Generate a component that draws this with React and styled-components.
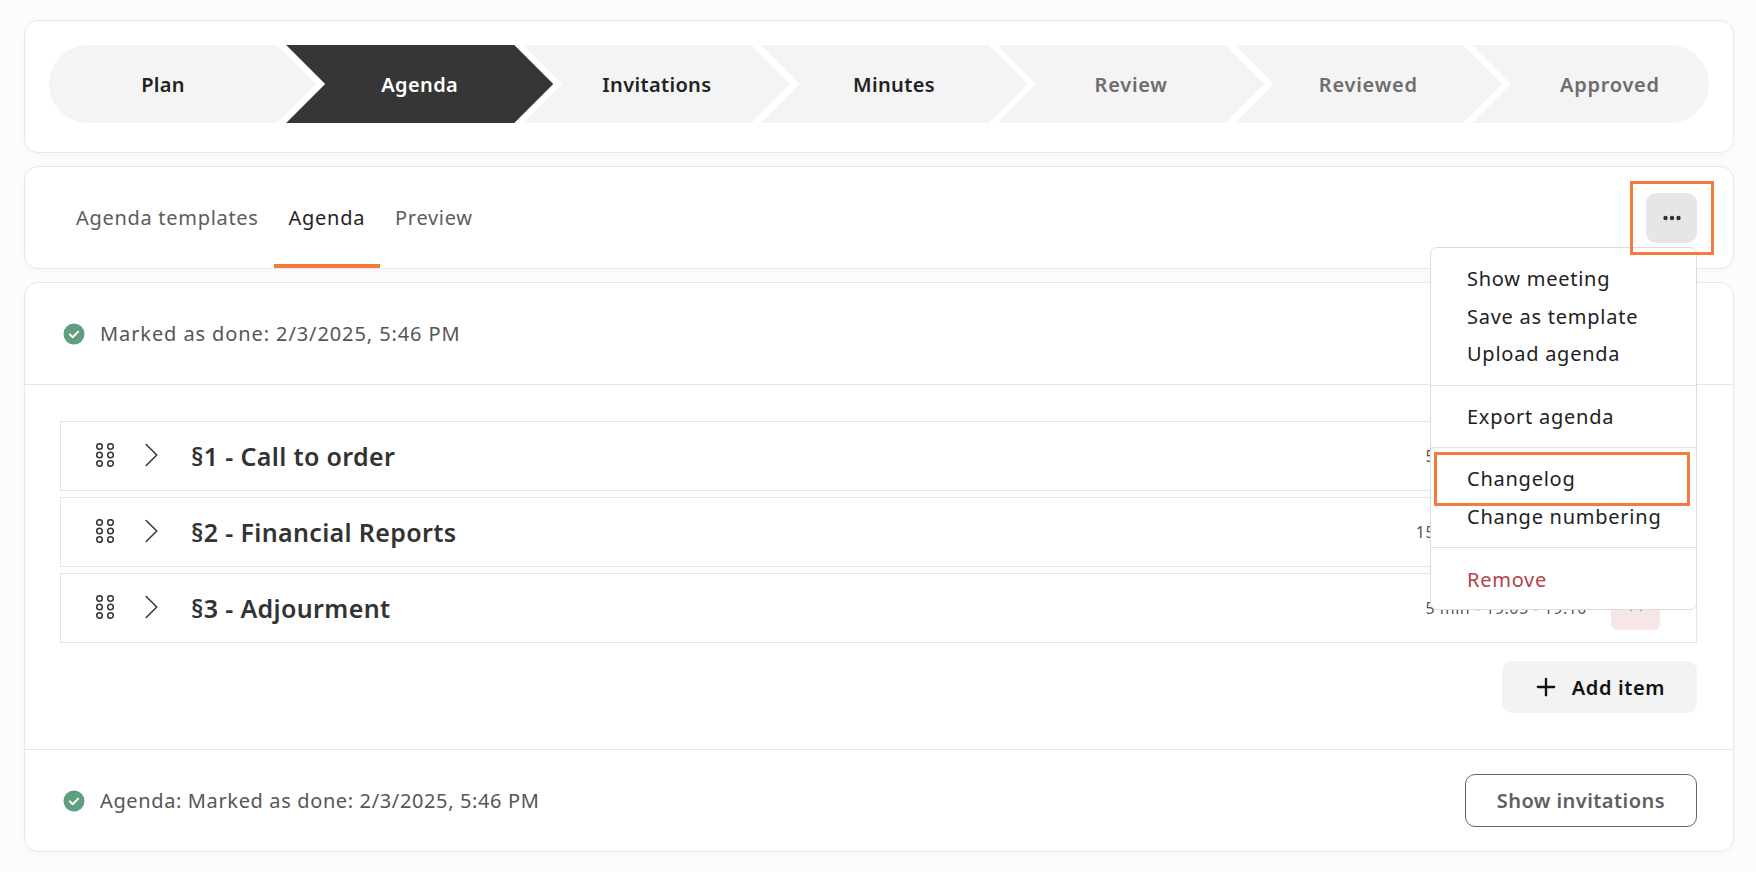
import React from "react";
import styled, { createGlobalStyle } from "styled-components";
import { X, Plus } from "lucide-react";

const fontStack = `"Noto Sans", "Lato", sans-serif`;

const GlobalStyle = createGlobalStyle`
  html, body {
    margin: 0;
    background: #fcfcfc;
    font-family: ${fontStack};
    color: #222;
  }
`;

const Page = styled.div`
  display: flex;
  flex-direction: column;
  gap: 13px;
  padding: 20px 22px 0 24px;
  height: 872px;
  box-sizing: border-box;
  overflow: hidden;
`;
const Card = styled.section`
  background: #fff;
  border: 1px solid #e8e8e8;
  border-radius: 14px;
  box-shadow: 0 2px 8px rgba(0, 0, 0, 0.025);
`;
const StepCard = styled(Card)`
  padding: 24px 24px 29px;
  height: 133px;
  box-sizing: border-box;
`;
const Steps = styled.div`
  display: grid;
  grid-template-columns: repeat(7, 1fr);
`;
const Step = styled.div`
  box-sizing: border-box;
  height: 78px;
  width: ${(p) => (p.$pos === "last" ? "100%" : "calc(100% + 30px)")};
  display: flex;
  align-items: center;
  justify-content: center;
  padding-left: ${(p) => (p.$pos === "last" ? "39px" : "0")};
  padding-right: ${(p) => (p.$pos === "first" ? "39px" : "0")};
  background: ${(p) => (p.$active ? "#363636" : "#f4f4f4")};
  color: ${(p) => (p.$active ? "#fff" : p.$muted ? "#6d6d6d" : "#222")};
  font-size: 20px;
  font-weight: 600;
  letter-spacing: ${(p) => (p.$muted ? "0.75px" : "0.35px")};
  border-radius: ${(p) =>
    p.$pos === "first" ? "39px 0 0 39px" : p.$pos === "last" ? "0 39px 39px 0" : "0"};
  clip-path: ${(p) =>
    p.$pos === "first"
      ? "polygon(0 0, calc(100% - 39px) 0, 100% 50%, calc(100% - 39px) 100%, 0 100%)"
      : p.$pos === "last"
      ? "polygon(0 0, 100% 0, 100% 100%, 0 100%, 39px 50%)"
      : "polygon(0 0, calc(100% - 39px) 0, 100% 50%, calc(100% - 39px) 100%, 0 100%, 39px 50%)"};
`;
const TabCard = styled(Card)`
  height: 103px;
  box-sizing: border-box;
  display: flex;
  align-items: stretch;
  justify-content: space-between;
  padding: 0 36px;
`;
const Tabs = styled.nav`
  display: flex;
`;
const Tab = styled.div`
  display: flex;
  align-items: center;
  padding: 4px 15px 0;
  font-size: 20px;
  letter-spacing: 0.7px;
  color: ${(p) => (p.$active ? "#1f1f1f" : "#5c5c5c")};
  border-bottom: 4px solid ${(p) => (p.$active ? "#f47b3c" : "transparent")};
`;
const MenuAnchor = styled.div`
  position: relative;
  align-self: center;
`;
const DotsButton = styled.button`
  display: flex;
  align-items: center;
  justify-content: center;
  width: 51px;
  height: 50px;
  padding: 0;
  border: 0;
  border-radius: 10px;
  background: #e6e6e6;
`;
const Highlight = styled.div`
  position: absolute;
  inset: ${(p) => p.$inset};
  border: 3px solid #f47b3c;
  pointer-events: none;
  z-index: 3;
`;
const Menu = styled.div`
  position: absolute;
  top: 54px;
  right: 0;
  width: 267px;
  box-sizing: border-box;
  background: #fff;
  border: 1px solid #dcdcdc;
  border-radius: 7px;
  z-index: 2;
`;
const MenuGroup = styled.div`
  padding: 12.5px 0 12px;
  & + & {
    border-top: 1px solid #e2e2e2;
  }
  &:nth-child(2),
  &:last-child {
    padding-bottom: 11px;
  }
`;
const MenuItem = styled.div`
  position: relative;
  height: 37.5px;
  display: flex;
  align-items: center;
  padding-left: 36px;
  font-size: 20px;
  letter-spacing: 0.75px;
  color: ${(p) => (p.$danger ? "#b5404a" : "#222")};
`;
const DoneRow = styled.div`
  display: flex;
  align-items: center;
  justify-content: space-between;
  height: 101px;
  padding: 0 36px 0 38px;
  box-sizing: border-box;
`;
const DoneText = styled.div`
  display: flex;
  align-items: center;
  gap: 15px;
  font-size: 20px;
  letter-spacing: ${(p) => p.$spacing};
  color: #565656;
`;
const AgendaCard = styled(Card)`
  flex: 0 0 570px;
  box-sizing: border-box;
`;
const Body = styled.div`
  display: flex;
  flex-direction: column;
  padding: 36px 36px 36px 35px;
  border-top: 1px solid #e6e6e6;
  border-bottom: 1px solid #e6e6e6;
`;
const Rows = styled.div`
  display: flex;
  flex-direction: column;
  gap: 6px;
`;
const Row = styled.div`
  display: flex;
  align-items: center;
  height: 70px;
  box-sizing: border-box;
  border: 1px solid #e4e4e4;
  padding: 0 36px 0 35px;
`;
const Grip = styled.svg`
  width: 18px;
  height: 24px;
  flex: none;
  margin-bottom: 3px;
`;
const Chevron = styled.svg`
  width: 13px;
  height: 24px;
  flex: none;
  margin: 0 0 3px 31px;
`;
const RowTitle = styled.h3`
  margin: 0 0 0 33px;
  font-size: 25px;
  font-weight: 600;
  letter-spacing: 0.35px;
  color: #333;
  flex: 1;
`;
const RowTime = styled.span`
  font-size: 16px;
  letter-spacing: 0.5px;
  color: #555;
  margin-right: 24px;
`;
const DeleteButton = styled.button`
  display: flex;
  align-items: center;
  justify-content: center;
  width: 49px;
  height: 50px;
  margin-bottom: 6px;
  padding: 0;
  border: 0;
  border-radius: 6px;
  background: #f8e6e6;
  color: #b5303c;
`;
const Actions = styled.div`
  display: flex;
  justify-content: flex-end;
  margin-top: 18px;
`;
const AddButton = styled.button`
  display: flex;
  align-items: center;
  gap: 12px;
  height: 52px;
  padding: 0 32px 0 30px;
  border: 0;
  border-radius: 10px;
  background: #f3f3f3;
  color: #111;
  font: 600 20px ${fontStack};
  letter-spacing: 0.6px;
`;
const OutlineButton = styled.button`
  height: 53px;
  padding: 0 31px;
  border: 1px solid #666;
  border-radius: 10px;
  background: #fff;
  color: #606060;
  font: 600 20px ${fontStack};
  letter-spacing: 0.45px;
`;

const steps = [
  { label: "Plan", pos: "first" },
  { label: "Agenda", active: true },
  { label: "Invitations" },
  { label: "Minutes" },
  { label: "Review", muted: true },
  { label: "Reviewed", muted: true },
  { label: "Approved", muted: true, pos: "last" },
];

const agendaItems = [
  { title: "§1 - Call to order", time: "5 min - 18.45 - 18.50" },
  { title: "§2 - Financial Reports", time: "15 min - 18.50 - 19.05" },
  { title: "§3 - Adjourment", time: "5 min - 19.05 - 19.10" },
];

const menuGroups = [
  ["Show meeting", "Save as template", "Upload agenda"],
  ["Export agenda"],
  ["Changelog", "Change numbering"],
  ["Remove"],
];

function CheckBadge() {
  return (
    <svg width="22" height="22" viewBox="0 0 22 22">
      <circle cx="11" cy="11" r="10.5" fill="#5f9f7f" />
      <path d="M6.8 11.4l2.9 2.8 5.5-5.6" fill="none" stroke="#fff" strokeWidth="2" strokeLinecap="round" strokeLinejoin="round" />
    </svg>
  );
}

function GripIcon() {
  const cells = [];
  for (let y of [3.5, 12, 20.5]) {
    for (let x of [3.5, 14.5]) {
      cells.push(<circle key={x + "-" + y} cx={x} cy={y} r="2.8" fill="none" stroke="#333" strokeWidth="1.5" />);
    }
  }
  return <Grip viewBox="0 0 18 24">{cells}</Grip>;
}

function ChevronIcon() {
  return (
    <Chevron viewBox="0 0 13 24">
      <path d="M1.2 1.5 L11.8 12 L1.2 22.5" fill="none" stroke="#333" strokeWidth="1.5" strokeLinecap="round" strokeLinejoin="round" />
    </Chevron>
  );
}

export default function App() {
  return (
    <>
      <GlobalStyle />
      <Page>
        <StepCard>
          <Steps>
            {steps.map((s) => (
              <Step key={s.label} $pos={s.pos} $active={s.active} $muted={s.muted}>
                {s.label}
              </Step>
            ))}
          </Steps>
        </StepCard>

        <TabCard>
          <Tabs>
            <Tab>Agenda templates</Tab>
            <Tab $active>Agenda</Tab>
            <Tab>Preview</Tab>
          </Tabs>
          <MenuAnchor>
            <DotsButton aria-label="More">
              <svg width="18" height="6" viewBox="0 0 18 6">
                <circle cx="2.5" cy="3" r="2.2" fill="#333" />
                <circle cx="9" cy="3" r="2.2" fill="#333" />
                <circle cx="15.5" cy="3" r="2.2" fill="#333" />
              </svg>
            </DotsButton>
            <Highlight $inset="-12px -17px -12px -16px" />
            <Menu>
              {menuGroups.map((group) => (
                <MenuGroup key={group[0]}>
                  {group.map((item) => (
                    <MenuItem key={item} $danger={item === "Remove"}>
                      {item}
                      {item === "Changelog" && <Highlight $inset="-8px 6px -8px 3px" />}
                    </MenuItem>
                  ))}
                </MenuGroup>
              ))}
            </Menu>
          </MenuAnchor>
        </TabCard>

        <AgendaCard>
          <DoneRow>
            <DoneText $spacing="0.9px">
              <CheckBadge />
              Marked as done: 2/3/2025, 5:46 PM
            </DoneText>
          </DoneRow>
          <Body>
            <Rows>
              {agendaItems.map((item) => (
                <Row key={item.title}>
                  <GripIcon />
                  <ChevronIcon />
                  <RowTitle>{item.title}</RowTitle>
                  <RowTime>{item.time}</RowTime>
                  <DeleteButton aria-label="Remove">
                    <X size={20} strokeWidth={2} />
                  </DeleteButton>
                </Row>
              ))}
            </Rows>
            <Actions>
              <AddButton>
                <Plus size={28} strokeWidth={2} />
                Add item
              </AddButton>
            </Actions>
          </Body>
          <DoneRow>
            <DoneText $spacing="0.63px">
              <CheckBadge />
              Agenda: Marked as done: 2/3/2025, 5:46 PM
            </DoneText>
            <OutlineButton>Show invitations</OutlineButton>
          </DoneRow>
        </AgendaCard>
      </Page>
    </>
  );
}
